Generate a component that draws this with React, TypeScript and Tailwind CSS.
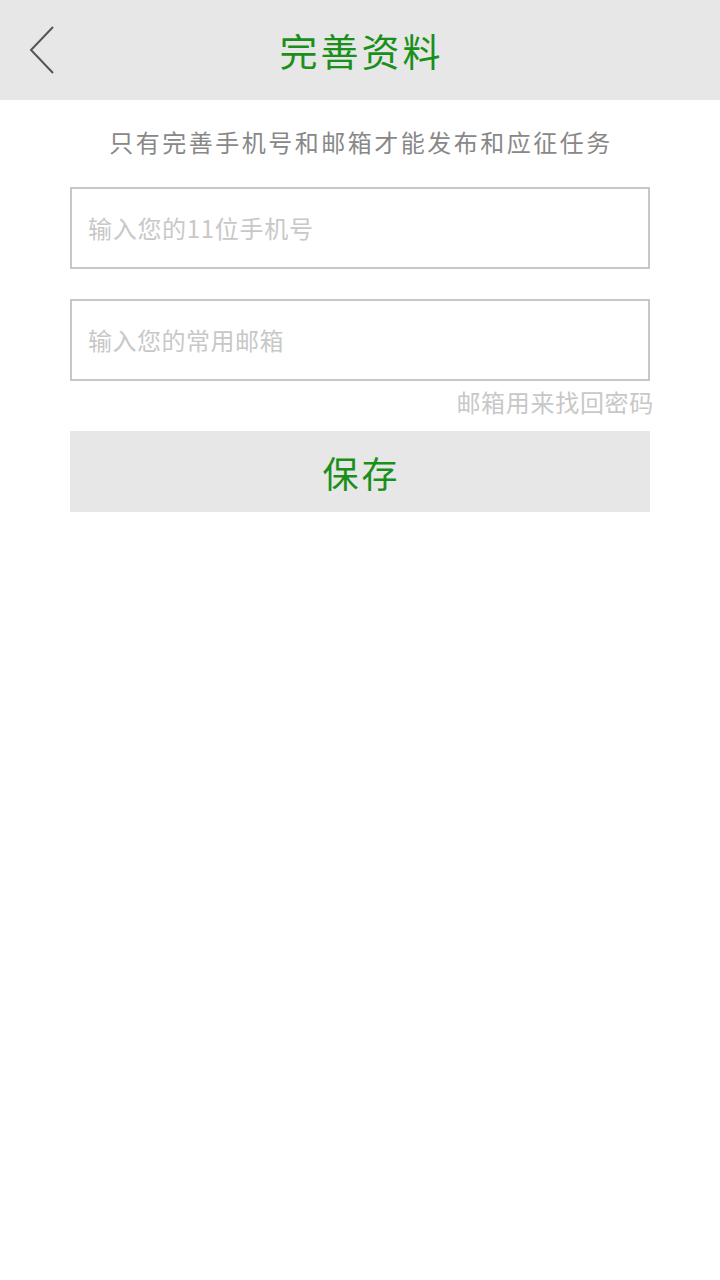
import React from "react";

export default function App() {
  const font = { fontFamily: '"Noto Sans CJK SC", "Noto Sans", sans-serif' };
  return (
    <div className="w-[720px] h-[1280px] bg-white flex flex-col" style={font}>
      <div className="h-[100px] bg-[#e7e7e7] relative flex items-center justify-center">
        <svg className="absolute left-[26px] top-[25px]" width="32" height="50" viewBox="0 0 32 50">
          <polyline points="27,2 5,25 27,48" fill="none" stroke="#555555" strokeWidth="2" />
        </svg>
        <span className="text-[38px] leading-none text-[#1a8f1a] tracking-[3px] pl-[3px]">完善资料</span>
      </div>
      <div className="flex flex-col items-center">
        <div className="mt-[27px] text-[24px] leading-[30px] text-[#888888] tracking-[2.5px] pl-[2px]">只有完善手机号和邮箱才能发布和应征任务</div>
        <div className="mt-[30px] w-[580px] flex flex-col">
          <div className="h-[82px] border-2 border-[#c8c8c8] flex items-center pl-[16px]">
            <span className="text-[24px] text-[#c8c8c8] tracking-[0.7px]">输入您的11位手机号</span>
          </div>
          <div className="mt-[30px] h-[82px] border-2 border-[#c8c8c8] flex items-center pl-[16px]">
            <span className="text-[24px] text-[#c8c8c8] tracking-[0.5px]">输入您的常用邮箱</span>
          </div>
          <div className="h-[50px] flex items-start pt-[4px] justify-end mr-[-4px]">
            <span className="text-[24px] leading-[34px] text-[#c8c8c8] tracking-[0.7px]">邮箱用来找回密码</span>
          </div>
          <div className="h-[81px] bg-[#e7e7e7] flex items-center justify-center">
            <span className="text-[36px] text-[#1a8f1a] tracking-[3px] pl-[3px]">保存</span>
          </div>
        </div>
      </div>
    </div>
  );
}
